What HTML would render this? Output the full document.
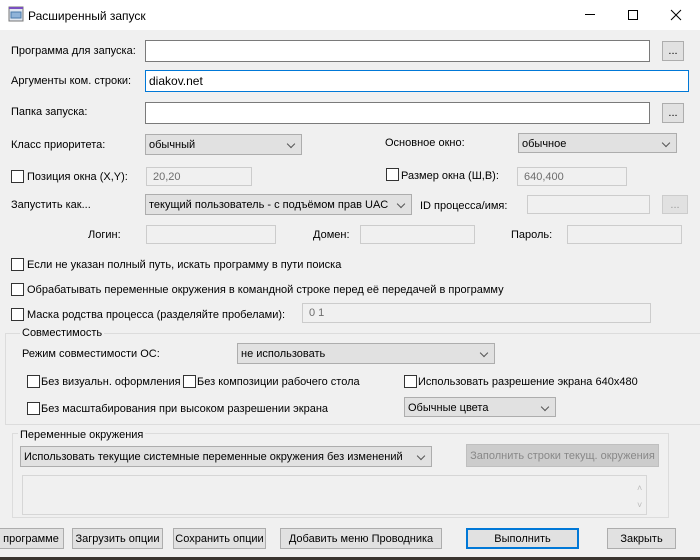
<!DOCTYPE html>
<html><head><meta charset="utf-8"><style>
*{box-sizing:border-box;margin:0;padding:0}
body{width:700px;height:560px;overflow:hidden;background:#f0f0f0;font-family:"Liberation Sans","Noto Sans CJK SC",sans-serif;font-size:11px;color:#000;position:relative}
.a{position:absolute;white-space:nowrap}
.t{position:absolute;line-height:12px;transform:translateY(-6px);white-space:nowrap}
.in{position:absolute;background:#fff;border:1px solid #7a7a7a}
.dis{position:absolute;background:#f0f0f0;border:1px solid #ccc;color:#6d6d6d;padding-left:6px;line-height:19px}
.sel{position:absolute;background:#e1e1e1;border:1px solid #adadad;padding-left:3px;line-height:21px}
.sel:after{content:"";position:absolute;right:7px;top:6px;width:5px;height:5px;border-right:1px solid #555;border-bottom:1px solid #555;transform:rotate(45deg)}
.btn{position:absolute;background:#e1e1e1;border:1px solid #adadad;text-align:center;line-height:21px}
.cb{position:absolute;width:13px;height:13px;background:#fff;border:1px solid #333}
.grp{position:absolute;border:1px solid #dcdcdc}
</style></head><body>
<div class="a" style="left:0;top:0;width:700px;height:30px;background:#fff"></div>
<svg class="a" style="left:8px;top:6px" width="16" height="16" viewBox="0 0 16 16"><rect x="1" y="1" width="14" height="14" fill="#dfe6ef" stroke="#777"/><rect x="1" y="1" width="14" height="2" fill="#7a4fc0"/><rect x="3" y="6" width="10" height="6" fill="#8fb3d8" stroke="#4a7aaa"/></svg>
<div class="t" style="left:28px;top:16px;font-size:12px">Расширенный запуск</div>
<div class="a" style="left:585px;top:14px;width:10px;height:1px;background:#000"></div>
<div class="a" style="left:628px;top:10px;width:10px;height:10px;border:1px solid #000"></div>
<svg class="a" style="left:670px;top:9px" width="12" height="12"><path d="M1 1L11 11M11 1L1 11" stroke="#000" stroke-width="1"/></svg>

<div class="t" style="left:11px;top:51px">Программа для запуска:</div>
<div class="in" style="left:145px;top:40px;width:505px;height:22px"></div>
<div class="btn" style="left:662px;top:41px;width:22px;height:20px;line-height:19px">...</div>
<div class="t" style="left:11px;top:81px">Аргументы ком. строки:</div>
<div class="in" style="left:145px;top:70px;width:544px;height:22px;border-color:#0078d7;padding-left:3px;line-height:21px;font-size:12px">diakov.net</div>
<div class="t" style="left:11px;top:112px">Папка запуска:</div>
<div class="in" style="left:145px;top:102px;width:505px;height:22px"></div>
<div class="btn" style="left:662px;top:103px;width:22px;height:20px;line-height:19px">...</div>

<div class="t" style="left:11px;top:145px">Класс приоритета:</div>
<div class="sel" style="left:145px;top:134px;width:157px;height:21px">обычный</div>
<div class="t" style="left:385px;top:143px">Основное окно:</div>
<div class="sel" style="left:518px;top:133px;width:159px;height:20px">обычное</div>

<div class="cb" style="left:11px;top:170px"></div>
<div class="t" style="left:27px;top:177px">Позиция окна (X,Y):</div>
<div class="dis" style="left:146px;top:167px;width:106px;height:19px">20,20</div>
<div class="cb" style="left:386px;top:168px"></div>
<div class="t" style="left:401px;top:176px">Размер окна (Ш,В):</div>
<div class="dis" style="left:517px;top:167px;width:110px;height:19px">640,400</div>

<div class="t" style="left:11px;top:205px">Запустить как...</div>
<div class="sel" style="left:145px;top:194px;width:267px;height:21px">текущий пользователь - с подъёмом прав UAC</div>
<div class="t" style="left:420px;top:206px">ID процесса/имя:</div>
<div class="dis" style="left:527px;top:195px;width:123px;height:19px"></div>
<div class="btn" style="left:662px;top:195px;width:26px;height:19px;color:#999;line-height:18px;border-color:#ccc">...</div>

<div class="t" style="left:88px;top:235px">Логин:</div>
<div class="dis" style="left:146px;top:225px;width:130px;height:19px"></div>
<div class="t" style="left:313px;top:235px">Домен:</div>
<div class="dis" style="left:360px;top:225px;width:115px;height:19px"></div>
<div class="t" style="left:511px;top:235px">Пароль:</div>
<div class="dis" style="left:567px;top:225px;width:115px;height:19px"></div>

<div class="cb" style="left:11px;top:258px"></div>
<div class="t" style="left:27px;top:265px">Если не указан полный путь, искать программу в пути поиска</div>
<div class="cb" style="left:11px;top:283px"></div>
<div class="t" style="left:27px;top:290px">Обрабатывать переменные окружения в командной строке перед её передачей в программу</div>
<div class="cb" style="left:11px;top:308px"></div>
<div class="t" style="left:27px;top:315px">Маска родства процесса (разделяйте пробелами):</div>
<div class="dis" style="left:302px;top:303px;width:349px;height:20px">0 1</div>

<div class="grp" style="left:5px;top:333px;width:700px;height:92px"></div>
<div class="t" style="left:20px;top:333px;background:#f0f0f0;padding:0 2px">Совместимость</div>
<div class="t" style="left:22px;top:354px">Режим совместимости ОС:</div>
<div class="sel" style="left:237px;top:343px;width:258px;height:21px">не использовать</div>
<div class="cb" style="left:27px;top:375px"></div>
<div class="t" style="left:41px;top:382px">Без визуальн. оформления</div>
<div class="cb" style="left:183px;top:375px"></div>
<div class="t" style="left:197px;top:382px">Без композиции рабочего стола</div>
<div class="cb" style="left:404px;top:375px"></div>
<div class="t" style="left:418px;top:382px">Использовать разрешение экрана 640x480</div>
<div class="cb" style="left:27px;top:402px"></div>
<div class="t" style="left:41px;top:409px">Без масштабирования при высоком разрешении экрана</div>
<div class="sel" style="left:404px;top:397px;width:152px;height:20px;line-height:20px">Обычные цвета</div>

<div class="grp" style="left:12px;top:433px;width:657px;height:85px"></div>
<div class="t" style="left:18px;top:435px;background:#f0f0f0;padding:0 2px">Переменные окружения</div>
<div class="sel" style="left:20px;top:446px;width:412px;height:21px">Использовать текущие системные переменные окружения без изменений</div>
<div class="btn" style="left:466px;top:444px;width:193px;height:23px;line-height:22px;background:#ccc;border-color:#bfbfbf;color:#888">Заполнить строки текущ. окружения</div>
<div class="a" style="left:22px;top:475px;width:625px;height:40px;border:1px solid #d6d6d6;background:#f0f0f0"></div>
<div class="t" style="left:637px;top:488px;color:#bbb;font-size:9px">˄</div>
<div class="t" style="left:637px;top:505px;color:#bbb;font-size:9px">˅</div>

<div class="btn" style="left:-2px;top:528px;width:66px;height:21px">программе</div>
<div class="btn" style="left:72px;top:528px;width:91px;height:21px">Загрузить опции</div>
<div class="btn" style="left:173px;top:528px;width:93px;height:21px">Сохранить опции</div>
<div class="btn" style="left:280px;top:528px;width:162px;height:21px">Добавить меню Проводника</div>
<div class="btn" style="left:466px;top:528px;width:113px;height:21px;border:2px solid #0078d7;line-height:19px">Выполнить</div>
<div class="btn" style="left:607px;top:528px;width:69px;height:21px">Закрыть</div>
<div class="a" style="left:0;top:557px;width:700px;height:3px;background:#3a3530"></div>
</body></html>
